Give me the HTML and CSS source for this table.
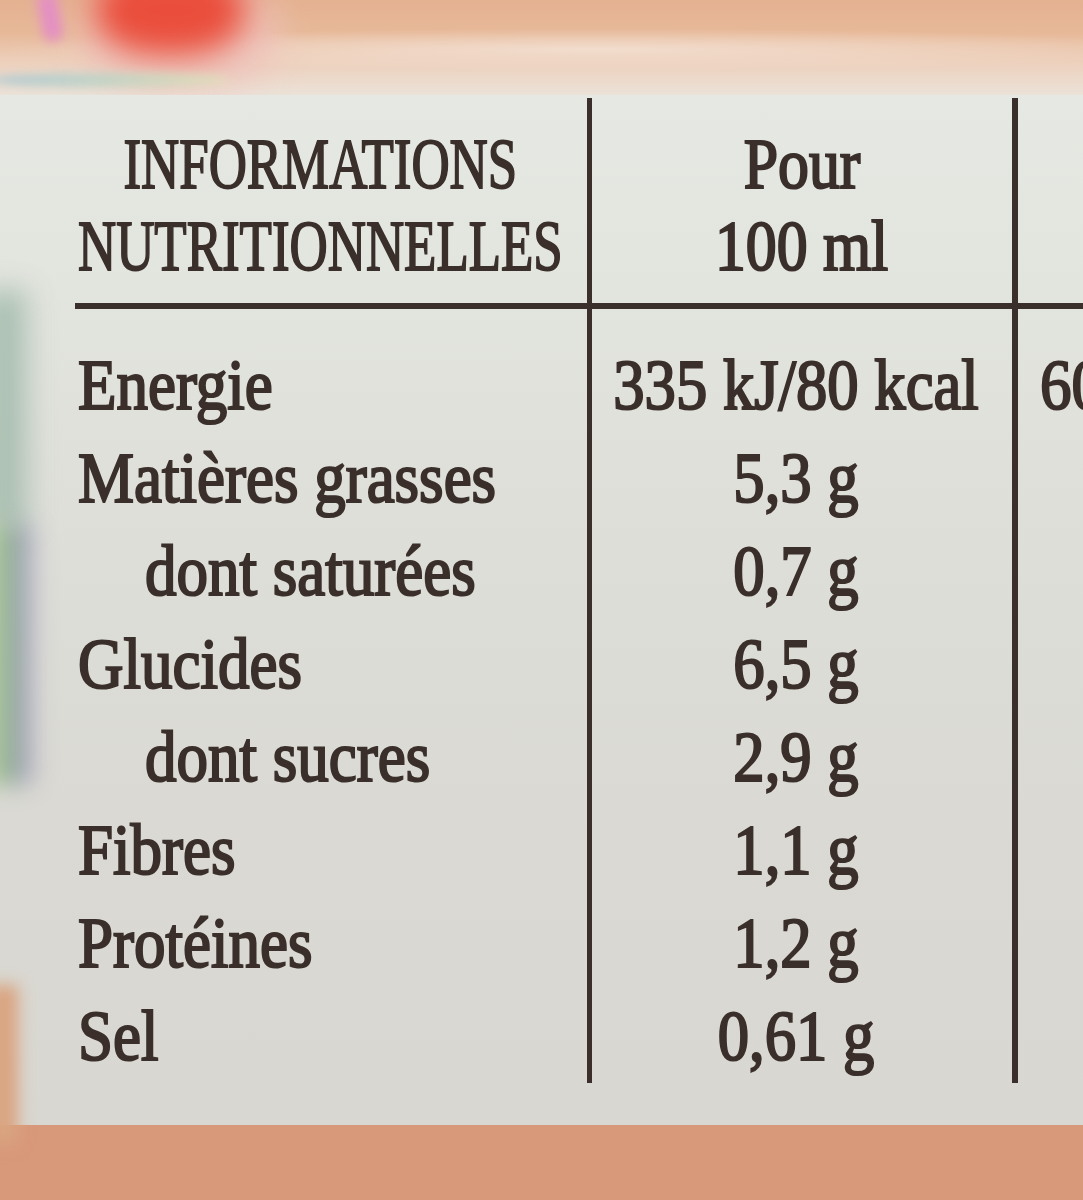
FILE: index.html
```html
<!DOCTYPE html>
<html lang="fr">
<head>
<meta charset="utf-8">
<title>Informations nutritionnelles</title>
<link rel="stylesheet" href="styles.css">
</head>
<body>
<div class="top">
  <div class="deco deco-band"></div>
  <div class="deco deco-pinkglow"></div>
  <div class="deco deco-pink"></div>
  <div class="deco deco-red"></div>
  <div class="deco deco-wave"></div>
</div>
<div class="panel">
  <div class="deco deco-green"></div>
  <div class="deco deco-green2"></div>
  <div class="deco deco-orange"></div>
  <div class="table">
    <div class="col col-label">
      <div class="head">
        <span class="caps">INFORMATIONS</span>
        <span class="caps">NUTRITIONNELLES</span>
      </div>
      <div class="rule"></div>
      <div class="rows">
        <div class="row"><span class="cond">Energie</span></div>
        <div class="row"><span class="cond">Matières grasses</span></div>
        <div class="row sub"><span class="cond">dont saturées</span></div>
        <div class="row"><span class="cond">Glucides</span></div>
        <div class="row sub"><span class="cond">dont sucres</span></div>
        <div class="row"><span class="cond">Fibres</span></div>
        <div class="row"><span class="cond">Protéines</span></div>
        <div class="row"><span class="cond">Sel</span></div>
      </div>
    </div>
    <div class="col col-value">
      <div class="head">
        <span class="cond-c">Pour</span>
        <span class="cond-c">100 ml</span>
      </div>
      <div class="rule"></div>
      <div class="rows">
        <div class="row"><span class="cond-c">335 kJ/80 kcal</span></div>
        <div class="row"><span class="cond-c">5,3 g</span></div>
        <div class="row"><span class="cond-c">0,7 g</span></div>
        <div class="row"><span class="cond-c">6,5 g</span></div>
        <div class="row"><span class="cond-c">2,9 g</span></div>
        <div class="row"><span class="cond-c">1,1 g</span></div>
        <div class="row"><span class="cond-c">1,2 g</span></div>
        <div class="row"><span class="cond-c">0,61 g</span></div>
      </div>
    </div>
    <div class="col col-extra">
      <div class="head"></div>
      <div class="rule"></div>
      <div class="rows">
        <div class="row"><span class="cond">60</span></div>
      </div>
    </div>
  </div>
</div>
</body>
</html>
```

FILE: styles.css
```css
html, body {
  margin: 0;
  padding: 0;
}
body {
  width: 1083px;
  height: 1200px;
  overflow: hidden;
  position: relative;
  background: #d8987a;
  font-family: "Liberation Serif", "Times New Roman", serif;
  color: #3a2f2a;
}
.top {
  position: relative;
  height: 95px;
  background: linear-gradient(180deg, #e4b191 0%, #e7b999 35%, #edd0bc 65%, #ebe2d8 100%);
  overflow: hidden;
}
.deco {
  position: absolute;
  pointer-events: none;
}
.deco-band {
  left: 0;
  top: 0;
  width: 1083px;
  height: 95px;
  background: radial-gradient(ellipse 55% 22% at 55% 52%, rgba(244, 228, 216, 0.75), rgba(244, 228, 216, 0));
}
.deco-pinkglow {
  left: 80px;
  top: -20px;
  width: 200px;
  height: 110px;
  background: #efc3bd;
  filter: blur(16px);
  border-radius: 45%;
  opacity: 0.8;
}
.deco-pink {
  left: 40px;
  top: -10px;
  width: 20px;
  height: 52px;
  background: #e48fc4;
  filter: blur(6px);
  border-radius: 10px;
  transform: rotate(-10deg);
}
.deco-red {
  left: 95px;
  top: -35px;
  width: 150px;
  height: 90px;
  background: #ea4d3b;
  filter: blur(16px);
  border-radius: 45%;
}
.deco-wave {
  left: -10px;
  top: 73px;
  width: 240px;
  height: 14px;
  background: linear-gradient(90deg, #9cc4d6, #b6d3c6 45%, #dbe7b8);
  filter: blur(5px);
  border-radius: 50%;
  opacity: 0.8;
}
.panel {
  position: relative;
  height: 1030px;
  background: linear-gradient(180deg, #e6e9e3 0%, #dfe0da 35%, #dad9d3 70%, #d9d7d1 100%);
}
.deco-green {
  left: -20px;
  top: 195px;
  width: 55px;
  height: 240px;
  background: linear-gradient(90deg, #b5cdb8, #86a798 55%, rgba(210, 220, 212, 0));
  filter: blur(14px);
  opacity: 0.75;
}
.deco-green2 {
  left: -18px;
  top: 430px;
  width: 56px;
  height: 260px;
  background: linear-gradient(90deg, #c2d98f, #77a681 50%, #8f88b2 72%, rgba(210, 215, 210, 0));
  filter: blur(12px);
  opacity: 0.8;
}
.deco-orange {
  left: -12px;
  top: 890px;
  width: 30px;
  height: 160px;
  background: #d9a480;
  filter: blur(8px);
}
.table {
  position: relative;
  display: flex;
  padding-top: 3px;
}
.col {
  display: flex;
  flex-direction: column;
  box-sizing: border-box;
}
.col-label {
  width: 587px;
}
.col-value {
  width: 425px;
  border-left: 5px solid #3a2f2a;
}
.col-extra {
  flex: 1;
  border-left: 6px solid #3a2f2a;
}
.head {
  height: 205px;
  box-sizing: border-box;
  padding-top: 25px;
  display: flex;
  flex-direction: column;
  align-items: center;
  font-size: 71px;
  line-height: 82px;
  white-space: nowrap;
}
.col-label .head {
  padding-left: 80px;
  padding-right: 27px;
}
.rule {
  height: 6px;
  background: #3a2f2a;
}
.col-label .rule {
  margin-left: 75px;
}
.rows {
  padding-top: 30px;
  font-size: 72px;
  line-height: 93px;
  white-space: nowrap;
}
.col-label .rows {
  padding-left: 78px;
}
.col-value .rows {
  display: flex;
  flex-direction: column;
  align-items: center;
  padding-right: 12px;
}
.col-extra .rows {
  padding-left: 22px;
}
.row {
  height: 93px;
}
.row.sub {
  padding-left: 67px;
}
.caps {
  display: inline-block;
  transform: scaleX(0.745);
  transform-origin: center;
  -webkit-text-stroke: 1.8px #3a2f2a;
}
.cond {
  display: inline-block;
  transform: scaleX(0.875);
  transform-origin: left;
  -webkit-text-stroke: 2.2px #3a2f2a;
}
.cond-c {
  display: inline-block;
  transform: scaleX(0.87);
  transform-origin: center;
  -webkit-text-stroke: 2.2px #3a2f2a;
}
```
